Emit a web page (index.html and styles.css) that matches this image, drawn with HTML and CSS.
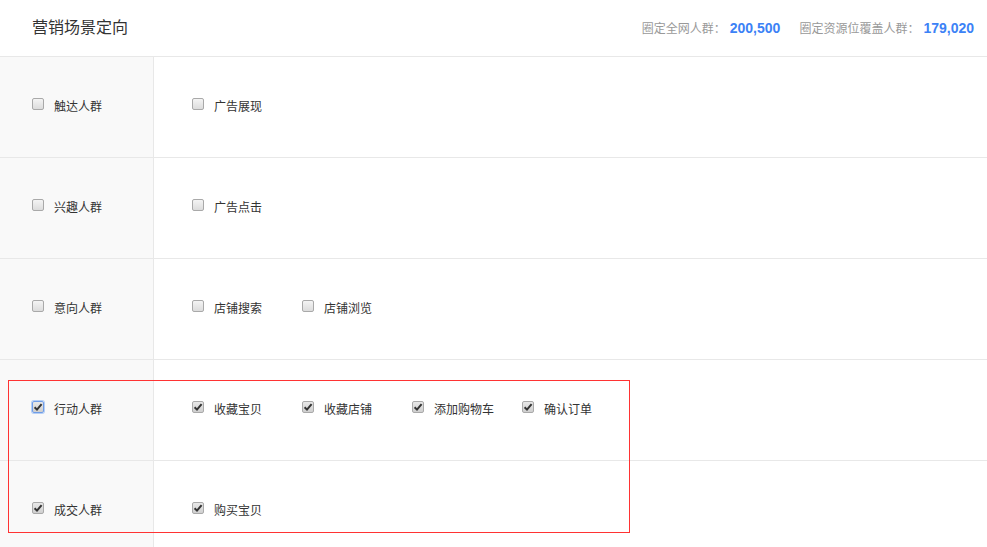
FILE: index.html
```html
<!DOCTYPE html>
<html lang="zh-CN">
<head>
    <meta charset="UTF-8">
    <title>营销场景定向</title>
    <link rel="stylesheet" href="styles.css">
</head>
<body>
    <div class="panel">
        <div class="panel-head">
            <h2>营销场景定向</h2>
            <div class="stats">
                <span class="stat-label">圈定全网人群：</span>
                <span class="stat-num">200,500</span>
                <span class="stat-label second">圈定资源位覆盖人群：</span>
                <span class="stat-num">179,020</span>
            </div>
        </div>

        <div class="scene-row">
            <div class="scene-side">
                <label class="chk"><span class="box"></span>触达人群</label>
            </div>
            <div class="scene-main">
                <label class="chk item"><span class="box"></span>广告展现</label>
            </div>
        </div>

        <div class="scene-row">
            <div class="scene-side">
                <label class="chk"><span class="box"></span>兴趣人群</label>
            </div>
            <div class="scene-main">
                <label class="chk item"><span class="box"></span>广告点击</label>
            </div>
        </div>

        <div class="scene-row">
            <div class="scene-side">
                <label class="chk"><span class="box"></span>意向人群</label>
            </div>
            <div class="scene-main">
                <label class="chk item"><span class="box"></span>店铺搜索</label>
                <label class="chk item"><span class="box"></span>店铺浏览</label>
            </div>
        </div>

        <div class="scene-row">
            <div class="scene-side">
                <label class="chk"><span class="box checked focus"><svg viewBox="0 0 10 10"><path d="M1.6 5.2 L4 7.6 L8.6 2.2"/></svg></span>行动人群</label>
            </div>
            <div class="scene-main">
                <label class="chk item"><span class="box checked"><svg viewBox="0 0 10 10"><path d="M1.6 5.2 L4 7.6 L8.6 2.2"/></svg></span>收藏宝贝</label>
                <label class="chk item"><span class="box checked"><svg viewBox="0 0 10 10"><path d="M1.6 5.2 L4 7.6 L8.6 2.2"/></svg></span>收藏店铺</label>
                <label class="chk item"><span class="box checked"><svg viewBox="0 0 10 10"><path d="M1.6 5.2 L4 7.6 L8.6 2.2"/></svg></span>添加购物车</label>
                <label class="chk item"><span class="box checked"><svg viewBox="0 0 10 10"><path d="M1.6 5.2 L4 7.6 L8.6 2.2"/></svg></span>确认订单</label>
            </div>
        </div>

        <div class="scene-row last">
            <div class="scene-side">
                <label class="chk"><span class="box checked"><svg viewBox="0 0 10 10"><path d="M1.6 5.2 L4 7.6 L8.6 2.2"/></svg></span>成交人群</label>
            </div>
            <div class="scene-main">
                <label class="chk item"><span class="box checked"><svg viewBox="0 0 10 10"><path d="M1.6 5.2 L4 7.6 L8.6 2.2"/></svg></span>购买宝贝</label>
            </div>
        </div>

        <!-- highlight annotation -->
        <div class="mark"></div>
    </div>
</body>
</html>
```

FILE: styles.css
```css
* {
    margin: 0;
    padding: 0;
    box-sizing: border-box;
}

body {
    background: #fff;
    font-family: "Noto Sans CJK SC", "Liberation Sans", sans-serif;
    color: #333;
    overflow: hidden;
}

.panel {
    position: relative;
    width: 987px;
}

.panel-head {
    height: 57px;
    border-bottom: 1px solid #e8e8e8;
    display: flex;
    justify-content: space-between;
    align-items: center;
    padding: 0 13px 0 32px;
}

.panel-head h2 {
    font-size: 16px;
    font-weight: normal;
    color: #333;
    margin-top: -4px;
}

.stats {
    display: flex;
    align-items: baseline;
    margin-top: -1px;
}

.stat-label {
    font-size: 12px;
    color: #999;
}

.stat-label.second {
    margin-left: 19px;
}

.stat-num {
    font-family: "Liberation Sans", sans-serif;
    font-size: 14px;
    font-weight: bold;
    color: #3c82f6;
    margin-left: 4px;
}

.scene-row {
    display: flex;
    height: 101px;
    border-bottom: 1px solid #e8e8e8;
}

.scene-row.last {
    border-bottom: none;
    height: 90px;
}

.scene-side {
    width: 154px;
    background: #f9f9f9;
    border-right: 1px solid #e8e8e8;
    padding: 40px 0 0 32px;
}

.scene-main {
    flex: 1;
    display: flex;
    padding: 40px 0 0 38px;
}

.chk {
    display: flex;
    align-items: flex-start;
    font-size: 12px;
    line-height: 18px;
    color: #333;
    cursor: pointer;
}

.chk.item {
    width: 110px;
}

.box {
    flex: none;
    display: flex;
    align-items: center;
    justify-content: center;
    width: 12px;
    height: 12px;
    margin: 1px 10px 0 0;
    border: 1px solid #a9a9a9;
    border-radius: 2px;
    background: linear-gradient(#f4f4f4, #dcdcdc);
}

.box svg {
    width: 10px;
    height: 10px;
}

.box svg path {
    fill: none;
    stroke: #333;
    stroke-width: 2;
}

.box.checked {
    background: linear-gradient(#e8e8e8, #cfcfcf);
}

.box.focus {
    border-color: #6f9de8;
    box-shadow: 0 0 0 1px #b6cff5;
}

.mark {
    position: absolute;
    left: 8px;
    top: 380px;
    width: 622px;
    height: 153px;
    border: 1px solid #f33;
    pointer-events: none;
}
```
